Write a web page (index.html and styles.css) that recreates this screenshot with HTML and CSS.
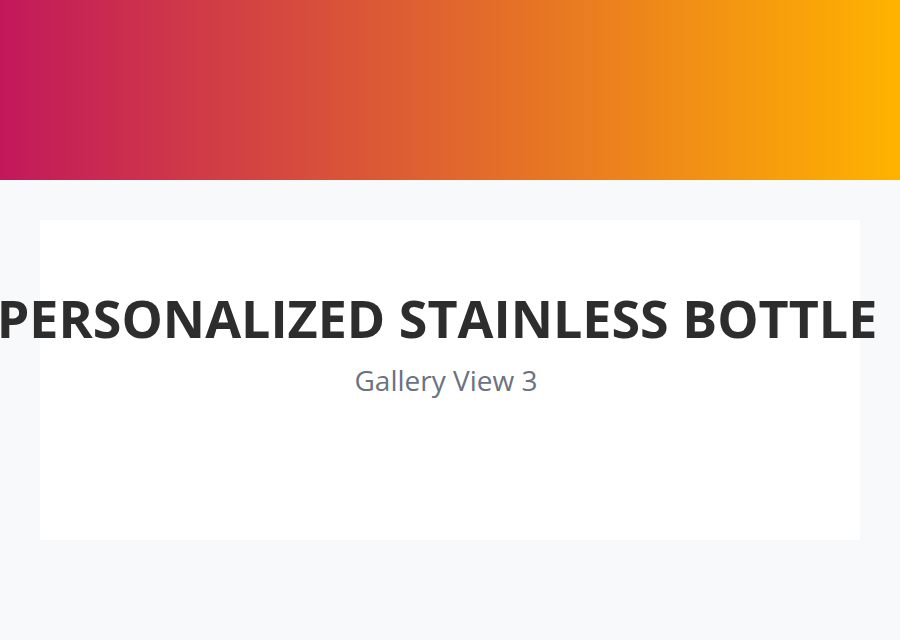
FILE: index.html
```html
<!DOCTYPE html>
<html>
<head>
<meta charset="utf-8">
<link rel="stylesheet" href="styles.css">
</head>
<body>
<header class="hero"></header>
<main class="page">
  <section class="card">
    <h1 class="title">PERSONALIZED STAINLESS BOTTLE</h1>
    <p class="subtitle">Gallery View 3</p>
  </section>
</main>
</body>
</html>
```
FILE: styles.css
```css
html, body {
  margin: 0;
  padding: 0;
}
body {
  background: #f8f9fb;
  font-family: "Open Sans", "Noto Sans", sans-serif;
  width: 900px;
  height: 640px;
  overflow: hidden;
}
.hero {
  height: 180px;
  background: linear-gradient(90deg, #c2185b 0%, #ffb300 100%);
}
.page {
  padding: 40px 40px;
}
.card {
  background: #ffffff;
  height: 320px;
  box-sizing: border-box;
  padding-top: 68px;
  display: flex;
  flex-direction: column;
  align-items: center;
}
.title {
  margin: 0;
  padding-right: 26px;
  font-size: 52px;
  font-weight: 700;
  line-height: 60px;
  color: #2d2d2d;
  white-space: nowrap;
}
.subtitle {
  margin: 14px 0 0;
  padding-right: 8px;
  font-size: 28px;
  line-height: 36px;
  color: #6b7280;
}
```
